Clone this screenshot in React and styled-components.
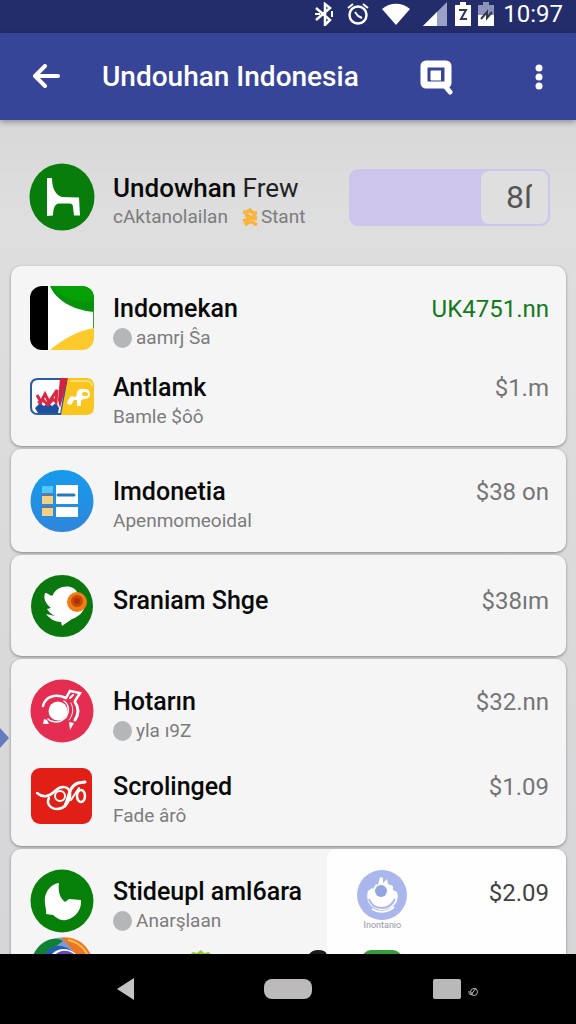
import React from 'react';
import styled, { createGlobalStyle } from 'styled-components';

const GlobalStyle = createGlobalStyle`
    * {
        box-sizing: border-box;
    }
    body {
        margin: 0;
        font-family: Roboto, "Liberation Sans", sans-serif;
        color: #0a0a0a;
        background: #dadada;
    }
    button {
        display: flex;
        align-items: center;
        justify-content: center;
        padding: 0;
        border: 0;
        background: none;
        cursor: pointer;
    }
    svg {
        display: block;
        flex: none;
    }
`;

/* ---------- icons ---------- */

const ChairIcon = () => (
    <svg width="66" height="68" viewBox="0 0 66 68" aria-hidden="true">
        <ellipse cx="33" cy="34" rx="32.5" ry="33.5" fill="#087d0b" />
        <path d="M18 15h5c0 9 3 17 10 19l17 .5 1 18h-6l-1-8c0-3-1-4-4-4H30c-4 0-6 5-6 12l-6 .5z" fill="#fff" />
    </svg>
);

const FlagIcon = () => (
    <svg width="64" height="64" viewBox="0 0 64 64" aria-hidden="true">
        <clipPath id="flag"><rect width="64" height="64" rx="12" /></clipPath>
        <g clipPath="url(#flag)">
            <rect width="64" height="64" fill="#fff" />
            <rect width="18" height="64" fill="#000" />
            <path d="M20 0h44v26C42 24 26 14 20 0z" fill="#07920b" />
            <path d="M22 0h42v14C48 19 31 12 22 0z" fill="#05a005" />
            <path d="M63 24h1v20h-1z" fill="#3b9a30" />
            <path d="M20 64c12-10 26-19 44-22v22z" fill="#fcca2c" />
        </g>
    </svg>
);

const BankIcon = () => (
    <svg width="64" height="37" viewBox="0 0 64 37" aria-hidden="true">
        <path d="M8 1h29l-6 35H8q-7 0-7-7V8q0-7 7-7z" fill="#fff" stroke="#2b5c9c" strokeWidth="2" />
        <path d="M30 0h8l-8 30-2-8z" fill="#cf2440" />
        <path d="M5 30l5-5 4 3 4-3 4 3 4-3 3 5-1 5H8z" fill="#1c4f9f" />
        <path d="M7 17l4 7 4-8 4 8 8-12-1 12-3-3-5 6-5-5-5 3" fill="none" stroke="#d92843" strokeWidth="3" />
        <path d="M38 0h18q8 0 8 8v21q0 8-8 8H31z" fill="#fac51d" />
        <path d="M40 3h16q6 0 6 5" fill="none" stroke="#fde391" strokeWidth="1.5" />
        <path d="M47 14q2-4 7-3 6 0 6 5t-6 5l-3 1v6h-4v-6h-3l-3 5-4-1 1-4 3-4 5 1z" fill="#fff" />
        <ellipse cx="55" cy="16" rx="3" ry="2" fill="#fac51d" />
    </svg>
);

const LedgerIcon = () => (
    <svg width="64" height="64" viewBox="0 0 64 64" aria-hidden="true">
        <defs>
            <linearGradient id="ledger" x1="0" y1="0" x2="0" y2="1">
                <stop offset="0" stopColor="#169bec" />
                <stop offset="1" stopColor="#2f86db" />
            </linearGradient>
        </defs>
        <rect x="0.5" y="1" width="63" height="62" rx="31" fill="url(#ledger)" />
        <path d="M12 17h11v7H12z" fill="#54c5ff" />
        <path d="M12 27h11v8H12zM12 39h11v8H12z" fill="#f5cf83" />
        <path d="M12 26h11M12 38h11" stroke="#6c7489" strokeWidth="2" />
        <path d="M26 16h22v19H26zM26 38h22v10H26z" fill="#fff" />
        <path d="M28 26h16" stroke="#2779b9" strokeWidth="3" strokeLinecap="round" />
    </svg>
);

const BirdIcon = () => (
    <svg width="64" height="64" viewBox="0 0 64 64" aria-hidden="true">
        <circle cx="32" cy="32" r="31" fill="#0b770f" />
        <path d="M15 19c4 0 5 4 8 2 3-9 19-12 24-3 6 3 9 8 8 14-2 7-7 11-13 13-3 2-7 5-10 7l-1-4c-6 0-11-3-15-8l9 2c-4-2-6-4-8-7l4-1c-5-4-8-9-6-15z" fill="#fff" />
        <circle cx="47" cy="28" r="10" fill="#ef7d17" />
        <circle cx="47" cy="27" r="6" fill="#c94708" />
        <circle cx="47" cy="27" r="3" fill="#aa3206" />
    </svg>
);

const OrbitIcon = () => (
    <svg width="64" height="64" viewBox="0 0 64 64" aria-hidden="true">
        <circle cx="32" cy="32" r="31.5" fill="#e52d51" />
        <circle cx="28" cy="32" r="9.5" fill="#fff" />
        <g fill="none" stroke="#fff" strokeLinecap="round">
            <path d="M13 27c2-9 12-13 23-8l4-7 10 2-5 8" strokeWidth="2.5" />
            <path d="M40 19l3-3" strokeWidth="2" />
            <path d="M34 22c7 5 6 19-7 21-4 0-7-1-9-3" strokeWidth="1.5" />
            <path d="M45 23c4 6 4 12 0 18" strokeWidth="3" />
            <path d="M41 24c3 6 2 12-2 17" strokeWidth="1" />
        </g>
        <path d="M14 40l3 1 2 4h-6zM39 43l5 1-4 7z" fill="#fff" />
    </svg>
);

const ScriptIcon = () => (
    <svg width="64" height="58" viewBox="0 0 64 58" aria-hidden="true">
        <rect x="1" y="1" width="61" height="56" rx="9" fill="#e11f17" />
        <g fill="none" stroke="#fff" strokeWidth="3" strokeLinecap="round">
            <path d="M7 26c7 6 13 3 18-2 6-6 14-5 15 2s-5 16-13 16c-7 0-11-6-8-11" strokeWidth="2.5" />
            <ellipse cx="30" cy="29" rx="5" ry="5" strokeWidth="2" />
            <path d="M35 39c4-9 4-20 13-23l7-1" />
            <path d="M41 33l8-12" strokeWidth="2" />
            <ellipse cx="51" cy="29" rx="4" ry="6" strokeWidth="2.5" />
        </g>
    </svg>
);

const LeafIcon = () => (
    <svg width="64" height="64" viewBox="0 0 64 64" aria-hidden="true">
        <circle cx="32" cy="32" r="31.5" fill="#07800a" />
        <path d="M16 45c1-4-2-9-1-17 2-8 7-13 14-14-1 7 0 14 6 19l4-3 12 1c1 10-6 18-15 20-6 1-9-2-13-5z" fill="#fff" />
    </svg>
);

const SwirlIcon = () => (
    <svg width="64" height="64" viewBox="0 0 64 64" aria-hidden="true">
        <circle cx="32" cy="32" r="31.5" fill="#7b9bd9" />
        <path d="M0 28C4 6 22-3 33 4L14 18v18H0z" fill="#0f8231" />
        <path d="M31 1c16-3 30 9 32 25l-18-7c-2-8-8-12-14-18z" fill="#ee7626" />
        <path d="M38 3c11 2 18 10 21 18" fill="none" stroke="#ffc24a" strokeWidth="2" />
        <path d="M13 20C19 5 37 5 47 20L32 32z" fill="#245faf" />
        <path d="M21 18c7-8 18-8 26 0L32 34z" fill="#fff" />
        <path d="M25 18c6-6 14-5 20 0L32 36z" fill="#6749bd" />
    </svg>
);

const RingIcon = () => (
    <svg width="50" height="50" viewBox="0 0 50 50" aria-hidden="true">
        <circle cx="25" cy="25" r="25" fill="#a9b7ed" />
        <path d="M11 21l4-3 1 1 3-5 2 1 2-8 3 1v5l4-4 1 5 5 2v4l4 2c3 9-3 17-14 18-12 0-18-9-15-19z" fill="#fff" />
        <circle cx="24" cy="21" r="6" fill="#94a6df" />
        <path d="M12 29c2 6 7 9 13 9s10-3 13-9" fill="none" stroke="#a9b7ed" strokeWidth="2" />
        <path d="M15 39c6 4 15 4 22-2" fill="none" stroke="#fff" strokeWidth="2" />
    </svg>
);

const StarMark = () => (
    <svg width="16" height="18" viewBox="0 0 16 18" aria-hidden="true">
        <g fill="none" stroke="#f8b43c" strokeWidth="3.5">
            <path d="M1 4h4l3-2 3 3h4M3 7l4 1 3 2 5 1M14 7l-5 3-8 3M3 17l4-3h3l5 3" />
        </g>
    </svg>
);

const BluetoothIcon = () => (
    <svg width="20" height="24" viewBox="0 0 20 24" fill="none" stroke="#fff" strokeWidth="2.5" aria-hidden="true">
        <path d="M2 6l14 12-5 5V2l5 4L2 18" />
        <path d="M1 12h5M18 9v6" strokeWidth="2" />
    </svg>
);

const AlarmIcon = () => (
    <svg width="22" height="24" viewBox="0 0 22 24" fill="none" stroke="#fff" aria-hidden="true">
        <circle cx="11" cy="13" r="8.5" strokeWidth="2.5" />
        <path d="M1 6l5-4M16 2l5 4M8 10l3 4 4 2" strokeWidth="2" />
    </svg>
);

const WifiIcon = () => (
    <svg width="28" height="22" viewBox="0 0 28 22" aria-hidden="true">
        <path d="M0 6C8-1 20-1 28 6L14 22z" fill="#fff" />
    </svg>
);

const SignalIcon = () => (
    <svg width="24" height="24" viewBox="0 0 24 24" aria-hidden="true">
        <path d="M24 0v24H0z" fill="#9ba2c8" />
        <path d="M14 10v14H0z" fill="#fff" />
    </svg>
);

const BatteryIcon = ({ fill, mark }) => (
    <svg width="16" height="24" viewBox="0 0 16 24" aria-hidden="true">
        <path d="M5 0h6v3h5v21H0V3h5z" fill={fill} />
        <path d="M0 13h16v11H0z" fill="#fff" />
        <path d={mark} fill="none" stroke="#333955" strokeWidth="2" />
    </svg>
);

const BackIcon = () => (
    <svg width="28" height="26" viewBox="0 0 28 26" fill="none" stroke="#fff" strokeWidth="4" strokeLinecap="round" strokeLinejoin="round" aria-hidden="true">
        <path d="M26 12H3M13 2L3 12l10 10" />
    </svg>
);

const SearchIcon = () => (
    <svg width="34" height="36" viewBox="0 0 34 36" fill="none" stroke="#fff" aria-hidden="true">
        <rect x="4" y="5" width="24" height="21" rx="2" strokeWidth="7" />
        <path d="M11 12h10v9H11z" fill="#fff" strokeWidth="1" />
        <path d="M25 27l5 6" strokeWidth="5" strokeLinecap="round" />
        <path d="M9 21V10h13v11" stroke="#374599" strokeWidth="2" />
    </svg>
);

const MoreIcon = () => (
    <svg width="8" height="26" viewBox="0 0 8 26" fill="#fff" aria-hidden="true">
        <circle cx="4" cy="4" r="3.5" />
        <circle cx="4" cy="13" r="3.5" />
        <circle cx="4" cy="22" r="3.5" />
    </svg>
);

/* ---------- data ---------- */

const groups = [
    {
        rowHeight: 79,
        padding: '12px 0 10px',
        rows: [
            { icon: <FlagIcon />, name: 'Indomekan', note: 'aamrj Ŝa', dot: true, price: 'UK4751.nn', tone: '#127a1c' },
            { icon: <BankIcon />, name: 'Antlamk', note: 'Bamle $ôô', price: '$1.m' },
        ],
    },
    {
        rowHeight: 103,
        rows: [{ icon: <LedgerIcon />, name: 'Imdonetia', note: 'Apenmomeoidal', price: '$38 on' }],
    },
    {
        rowHeight: 101,
        rows: [{ icon: <BirdIcon />, name: 'Sraniam Shge', price: '$38ım' }],
    },
    {
        rowHeight: 85,
        padding: '9px 0 8px',
        pointer: true,
        rows: [
            { icon: <OrbitIcon />, name: 'Hotarın', note: 'yla ı9Z', dot: true, price: '$32.nn' },
            { icon: <ScriptIcon />, name: 'Scrolinged', note: 'Fade ârô', price: '$1.09' },
        ],
    },
];

const Row = ({ item, height }) => (
    <ItemRow $height={height}>
        {item.icon}
        <Body $single={!item.note}>
            <Line>
                <Name>{item.name}</Name>
                {item.price && <Price $tone={item.tone}>{item.price}</Price>}
            </Line>
            {item.note && (
                <Note>
                    {item.dot && <Dot />}
                    {item.note}
                </Note>
            )}
        </Body>
    </ItemRow>
);

const App = () => (
    <Screen>
        <GlobalStyle />
        <StatusBar>
            <BluetoothIcon />
            <AlarmIcon />
            <WifiIcon />
            <SignalIcon />
            <Batteries>
                <BatteryIcon fill="#fff" mark="M4 8h7l-5 9h6" />
                <BatteryIcon fill="#8d94bb" mark="M3 17l6-7v6l5-6" />
            </Batteries>
            <Clock>10:97</Clock>
        </StatusBar>
        <AppBar>
            <button type="button" aria-label="Back"><BackIcon /></button>
            <Title>Undouhan Indonesia</Title>
            <SearchButton type="button" aria-label="Search"><SearchIcon /></SearchButton>
            <MoreButton type="button" aria-label="More options"><MoreIcon /></MoreButton>
        </AppBar>
        <Content>
            <Hero>
                <ChairIcon />
                <HeroText>
                    <HeroName>Undowhan <Light>Frew</Light></HeroName>
                    <Note>cAktanolailan <Star><StarMark /></Star>Stant</Note>
                </HeroText>
                <Meter>
                    <MeterValue type="text" aria-label="Amount" defaultValue="8ſ" />
                </Meter>
            </Hero>
            <Cards>
                {groups.map((group, i) => (
                    <Card key={i} $padding={group.padding} $pointer={group.pointer}>
                        {group.rows.map((item) => (
                            <Row key={item.name} item={item} height={group.rowHeight} />
                        ))}
                    </Card>
                ))}
                <SplitCard>
                    <SplitList>
                        <Row item={{ icon: <LeafIcon />, name: 'Stideupl aml6ara', note: 'Anarşlaan', dot: true }} height={85} />
                        <NextRow>
                            <SwirlIcon />
                            <svg width="24" height="20" viewBox="0 0 24 20" aria-hidden="true">
                                <path d="M0 5l4-3 4 1 4-3 3 3 5-1 3 4v14H0z" fill="#91c83e" />
                            </svg>
                            <svg width="20" height="22" viewBox="0 0 20 22" aria-hidden="true">
                                <path d="M0 8Q3 0 11 0q9 0 9 6v16H0z" fill="#1c1c1c" />
                            </svg>
                        </NextRow>
                    </SplitList>
                    <SidePanel>
                        <Badge>
                            <RingIcon />
                            <Caption>Inontanio</Caption>
                            <GreenTile />
                        </Badge>
                        <Price $tone="#424242">$2.09</Price>
                    </SidePanel>
                </SplitCard>
            </Cards>
        </Content>
        <NavBar>
            <button type="button" aria-label="Back">
                <svg width="17" height="22" viewBox="0 0 17 22" aria-hidden="true">
                    <path d="M17 0v22L0 11z" fill="#c4c4c4" />
                </svg>
            </button>
            <HomeButton type="button" aria-label="Home" />
            <RecentGroup>
                <RecentButton type="button" aria-label="Recent apps" />
                <svg width="10" height="10" viewBox="0 0 10 10" fill="none" stroke="#b5b5b5" aria-hidden="true">
                    <circle cx="6" cy="5" r="3.5" />
                    <path d="M1 4q-1 3 2 4l5-7M4 5v3" />
                </svg>
            </RecentGroup>
        </NavBar>
    </Screen>
);

export default App;

/* ---------- styles ---------- */

const Screen = styled.div`
    display: flex;
    flex-direction: column;
    height: 100vh;
    overflow: hidden;
`;

const StatusBar = styled.div`
    display: flex;
    flex: none;
    align-items: center;
    justify-content: flex-end;
    gap: 13px;
    padding: 2px 13px 7px;
    background: #242d6b;
`;

const Batteries = styled.div`
    display: flex;
    gap: 7px;
    margin: 0 -4px 0 -5px;
`;

const Clock = styled.time`
    color: #fff;
    font-size: 24px;
    line-height: 24px;
`;

const AppBar = styled.header`
    display: flex;
    flex: none;
    align-items: center;
    height: 87px;
    padding: 0 33px 0 32px;
    background: #374599;
    box-shadow: 0 2px 6px rgba(0, 0, 0, 0.35);
    z-index: 1;
`;

const Title = styled.h1`
    flex: 1;
    margin: 0 0 0 42px;
    color: #fff;
    font-size: 28px;
    font-weight: 500;
    line-height: 32px;
    white-space: nowrap;
`;

const SearchButton = styled.button`
    margin-right: 81px;
`;

const MoreButton = styled.button`
    height: 32px;
`;

const Content = styled.main`
    flex: 1;
    min-height: 0;
    overflow: hidden;
    background: linear-gradient(#d8d8d8, #dedede 90px, #d6d6d8);
`;

const Hero = styled.section`
    display: flex;
    align-items: center;
    padding: 43px 26px 35px 29px;
`;

const HeroText = styled.div`
    flex: 1;
    margin-left: 18px;
    padding-top: 8px;
`;

const Name = styled.h3`
    margin: 0;
    font-size: 25px;
    font-weight: 500;
    line-height: 32px;
    white-space: nowrap;
`;

const HeroName = styled.h2`
    margin: 0;
    font-size: 26px;
    font-weight: 500;
    line-height: 32px;
    white-space: nowrap;
`;

const Light = styled.span`
    font-weight: 400;
    color: #222;
`;

const Note = styled.p`
    display: flex;
    align-items: center;
    margin: 0;
    color: #7c7c7c;
    font-size: 19px;
    line-height: 26px;
    white-space: nowrap;
`;

const Star = styled.span`
    margin: 0 3px 0 14px;
`;

const Dot = styled.span`
    width: 19px;
    height: 20px;
    margin-right: 4px;
    border-radius: 50%;
    background: #b4b6b7;
`;

const Meter = styled.div`
    display: flex;
    justify-content: flex-end;
    width: 201px;
    height: 57px;
    padding: 2px;
    border-radius: 9px;
    background: #cec5ec;
`;

const MeterValue = styled.input`
    width: 67px;
    padding: 0 16px 0 0;
    border: 0;
    border-radius: 8px;
    background: #dfdfdf;
    color: #555;
    font-family: inherit;
    font-size: 32px;
    text-align: right;
`;

const Cards = styled.div`
    display: flex;
    flex-direction: column;
    gap: 3px;
    padding: 0 10px 0 11px;
`;

const Card = styled.section`
    position: relative;
    padding: ${(props) => props.$padding || '0'};
    border-radius: 10px;
    background: #f5f5f5;
    box-shadow: 0 1px 3px rgba(0, 0, 0, 0.4);

    &::before {
        content: ${(props) => (props.$pointer ? '""' : 'none')};
        position: absolute;
        top: 69px;
        left: -11px;
        border: solid transparent;
        border-width: 10px 0 10px 9px;
        border-left-color: #647bc2;
    }
`;

const ItemRow = styled.article`
    display: flex;
    align-items: center;
    gap: 19px;
    height: ${(props) => props.$height}px;
    padding: 0 17px 0 19px;
`;

const Body = styled.div`
    flex: 1;
    min-width: 0;
    padding: ${(props) => (props.$single ? '0 0 9px' : '9px 0 0')};
`;

const Line = styled.div`
    display: flex;
    justify-content: space-between;
`;

const Price = styled.span`
    color: ${(props) => props.$tone || '#757575'};
    font-size: 24px;
    line-height: 32px;
    white-space: nowrap;
`;

const SplitCard = styled(Card)`
    display: flex;
`;

const SplitList = styled.div`
    flex: 1;
    min-width: 0;
    padding-top: 9px;
`;

const NextRow = styled.div`
    display: flex;
    align-items: flex-start;
    justify-content: space-between;
    padding: 0 0 0 19px;
    margin-top: -6px;

    svg + svg {
        margin-top: 13px;
    }
`;

const SidePanel = styled.aside`
    display: flex;
    align-items: flex-start;
    justify-content: space-between;
    width: 43%;
    padding: 21px 17px 0 30px;
    border-radius: 10px;
    background: #fefefe;

    ${Price} {
        margin-top: 7px;
    }
`;

const Badge = styled.div`
    display: flex;
    flex-direction: column;
    align-items: center;
`;

const Caption = styled.span`
    color: #9496a8;
    font-size: 9px;
    line-height: 10px;
`;

const GreenTile = styled.div`
    width: 40px;
    height: 40px;
    margin-top: 20px;
    border-radius: 9px;
    background: #369b38;
`;

const NavBar = styled.nav`
    display: grid;
    flex: none;
    grid-template-columns: 1fr 48px 1fr;
    align-items: center;
    height: 70px;
    background: #000;
    z-index: 1;

    & > button:first-child {
        justify-self: center;
        margin-right: 14px;
    }
`;

const HomeButton = styled.button`
    height: 20px;
    border-radius: 8px;
    background: #bcbabb !important;
`;

const RecentGroup = styled.div`
    display: flex;
    align-items: center;
    justify-self: center;
    gap: 7px;
    margin-left: 22px;

    svg {
        margin-top: 5px;
    }
`;

const RecentButton = styled.button`
    width: 28px;
    height: 20px;
    border-radius: 2px;
    background: #b9b9b9 !important;
`;
